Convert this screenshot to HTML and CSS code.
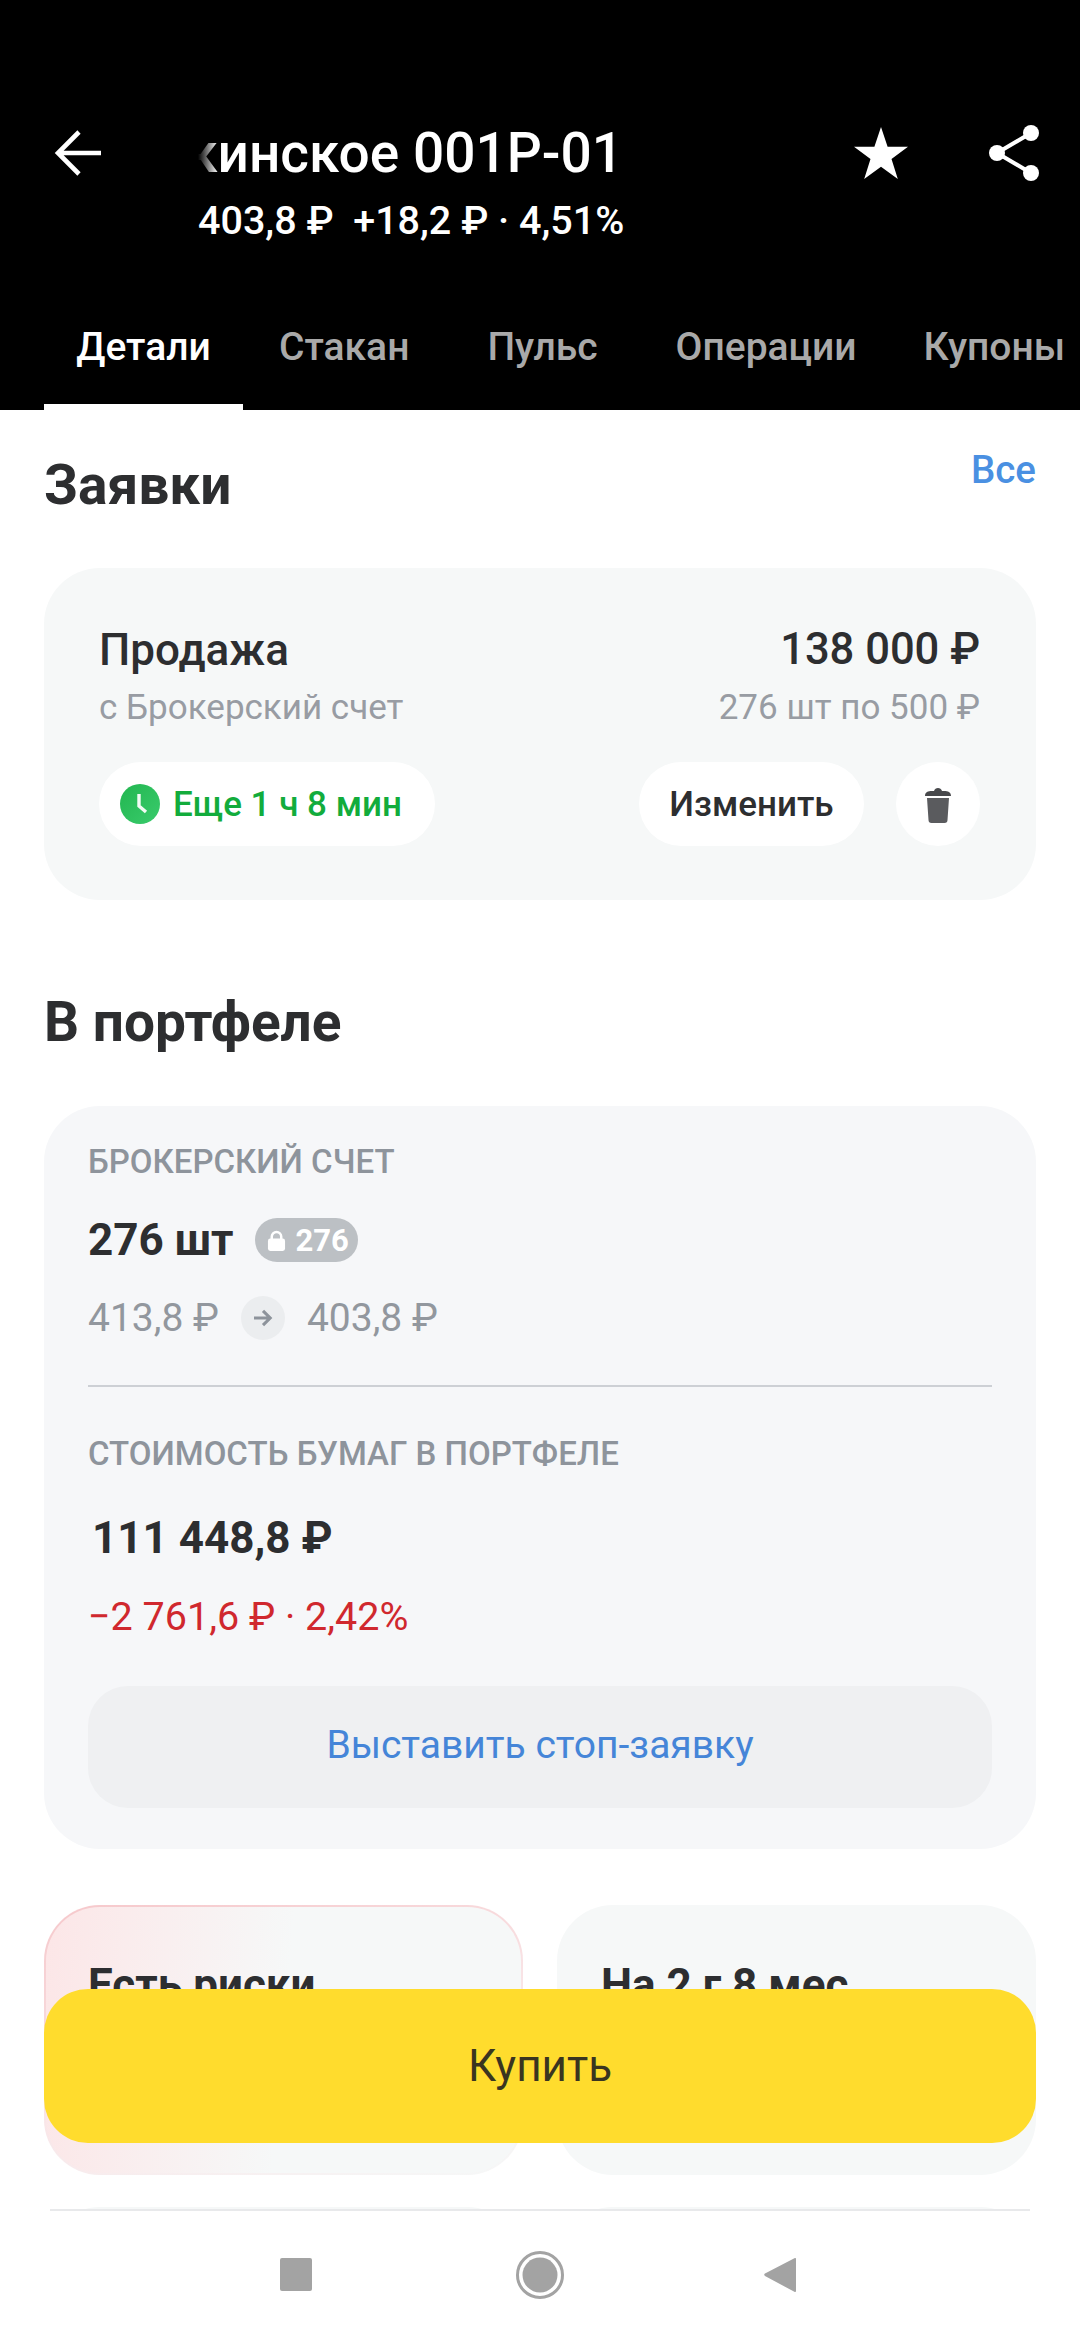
FILE: index.html
```html
<!DOCTYPE html>
<html lang="ru">
<head>
  <meta charset="UTF-8" />
  <meta name="viewport" content="width=device-width, initial-scale=1.0"/>
  <title>Детали</title>
  <link rel="stylesheet" href="styles.css">
</head>
<body>
  <div class="screen">
    <header class="top-bar">
      <div class="head-row">
        <svg class="back-icon" viewBox="0 0 48 48"><path d="M47 24H4M25 3 4 24l21 21" fill="none" stroke="#fff" stroke-width="4.6"/></svg>
        <div class="head-title">
          <div class="title-clip"><span class="title-text">кинское 001Р-01</span></div>
          <div class="head-price">403,8 ₽&nbsp;&nbsp;+18,2 ₽ · 4,51%</div>
        </div>
        <svg class="star-icon" viewBox="0 0 54 52"><path d="M27 0l6.600 19.800H54L37.500 32 43.800 52 27 39.800 10.200 52 16.500 32 0 19.800h20.400z" fill="#fff"/></svg>
        <svg class="share-icon" viewBox="0 0 50 56"><g fill="#fff"><circle cx="42" cy="8" r="8"/><circle cx="8" cy="28" r="8"/><circle cx="42" cy="48" r="8"/></g><path d="M42 8 8 28l34 20" fill="none" stroke="#fff" stroke-width="4"/></svg>
      </div>
      <nav class="tabs">
        <a class="tab tab-active">Детали</a>
        <a class="tab tab-stakan">Стакан</a>
        <a class="tab tab-puls">Пульс</a>
        <a class="tab tab-oper">Операции</a>
        <a class="tab">Купоны</a>
      </nav>
    </header>

    <main class="content">
      <div class="section-head">
        <h2>Заявки</h2>
        <a class="all-link">Все</a>
      </div>

      <section class="card order-card">
        <div class="order-row">
          <span class="order-type">Продажа</span>
          <span class="order-sum">138 000 ₽</span>
        </div>
        <div class="order-row order-sub">
          <span>с Брокерский счет</span>
          <span>276 шт по 500 ₽</span>
        </div>
        <div class="order-actions">
          <div class="pill timer-pill">
            <svg class="clock-icon" viewBox="0 0 40 40">
              <defs><linearGradient id="clockGreen" x1="0" y1="0" x2="1" y2="1"><stop offset="0" stop-color="#22b650"/><stop offset="1" stop-color="#3acb6c"/></linearGradient></defs>
              <circle cx="20" cy="20" r="20" fill="url(#clockGreen)"/>
              <path d="M19 10v12l7 6" fill="none" stroke="#f2fbf4" stroke-width="3.400"/>
            </svg>
            <span>Еще 1 ч 8 мин</span>
          </div>
          <div class="pill edit-pill">Изменить</div>
          <div class="pill trash-pill">
            <svg class="trash-icon" viewBox="0 0 26 37"><path d="M0 10C0 6 3 5 7 5h2c1-4 7-4 8 0h2c4 0 7 1 7 5z" fill="#47484b"/><path d="M2 12h22l-1.500 22a3 3 0 0 1-3 3h-13a3 3 0 0 1-3-3z" fill="#5a5b5e"/></svg>
          </div>
        </div>
      </section>

      <h2 class="portfolio-title">В портфеле</h2>

      <section class="card portfolio-card">
        <div class="caps-label">БРОКЕРСКИЙ СЧЕТ</div>
        <div class="qty-row">
          <span class="qty">276 шт</span>
          <span class="lock-badge">
            <svg class="lock-icon" viewBox="0 0 20 22"><path d="M5 10V7a5 5 0 0 1 10 0v3" fill="none" stroke="#fff" stroke-width="2.600"/><rect x="1" y="9" width="18" height="13" rx="2.500" fill="#fff"/></svg>
            276
          </span>
        </div>
        <div class="price-row">
          <span>413,8 ₽</span>
          <span class="arrow-dot">
            <svg viewBox="0 0 22 20"><path d="M1 10h18M11 2l8 8-8 8" fill="none" stroke="#8d939b" stroke-width="3.400"/></svg>
          </span>
          <span>403,8 ₽</span>
        </div>
        <div class="divider"></div>
        <div class="caps-label">СТОИМОСТЬ БУМАГ В ПОРТФЕЛЕ</div>
        <div class="total">111 448,8 ₽</div>
        <div class="loss">−2 761,6 ₽ · 2,42%</div>
        <div class="stop-btn">Выставить стоп-заявку</div>
      </section>

      <div class="mini-cards">
        <div class="mini-card risk-card">Есть риски</div>
        <div class="mini-card">На 2 г 8 мес</div>
      </div>
      <div class="mini-cards next-row">
        <div class="mini-card"></div>
        <div class="mini-card"></div>
      </div>
    </main>

    <button class="buy-btn">Купить</button>

    <footer class="nav-bar">
      <svg class="nav-square" viewBox="0 0 32 33"><rect width="32" height="33" rx="2" fill="#a3a3a3"/></svg>
      <svg class="nav-circle" viewBox="0 0 48 48"><circle cx="24" cy="24" r="22.500" fill="none" stroke="#a3a3a3" stroke-width="3"/><circle cx="24" cy="24" r="17.500" fill="#a3a3a3"/></svg>
      <svg class="nav-back" viewBox="0 0 32 36"><path d="M32 2v32a1 1 0 0 1-1.600.800L1 19a1.500 1.500 0 0 1 0-2.400L30.400 1.200A1 1 0 0 1 32 2z" fill="#a3a3a3"/></svg>
    </footer>
  </div>
</body>
</html>
```

FILE: styles.css
```css
* {
  box-sizing: border-box;
}

body {
  margin: 0;
  font-family: Roboto, "Noto Sans", sans-serif;
  color: #2d2e30;
  background: #fff;
}

.screen {
  position: relative;
  width: 1080px;
  height: 2340px;
  display: flex;
  flex-direction: column;
  overflow: hidden;
}

.top-bar {
  height: 410px;
  background: #000;
  color: #fff;
  padding-top: 118px;
  flex-shrink: 0;
}

.head-row {
  display: flex;
  align-items: flex-start;
  height: 130px;
  padding: 0 41px 0 54px;
}

.back-icon {
  width: 48px;
  height: 48px;
  margin-top: 11px;
}

.head-title {
  margin-left: 96px;
}

.title-clip {
  width: 425px;
  overflow: hidden;
  display: flex;
  justify-content: flex-end;
  -webkit-mask-image: linear-gradient(90deg, transparent 0, #000 20px);
  mask-image: linear-gradient(90deg, transparent 0, #000 20px);
}

.title-text {
  font-size: 55px;
  font-weight: 500;
  line-height: 70px;
  white-space: nowrap;
}

.head-price {
  font-size: 39.5px;
  font-weight: 500;
  line-height: 50px;
  margin-top: 8px;
  white-space: nowrap;
}

.star-icon {
  width: 54px;
  height: 52px;
  margin-left: auto;
  margin-top: 9px;
}

.share-icon {
  width: 50px;
  height: 56px;
  margin-left: 81px;
  margin-top: 7px;
}

.tabs {
  display: flex;
  height: 162px;
  font-size: 39px;
  font-weight: 500;
  color: #a9a9a9;
}

.tab {
  display: block;
  padding-top: 76px;
  white-space: nowrap;
}

.tab-active {
  width: 199px;
  margin-left: 44px;
  text-align: center;
  color: #fff;
  border-bottom: 6px solid #fff;
}

.tab-stakan {
  margin-left: 36px;
}

.tab-puls {
  margin-left: 78px;
}

.tab-oper {
  margin-left: 78px;
}

.tab:last-child {
  margin-left: 67px;
}

.content {
  padding: 0 44px;
}

.section-head {
  display: flex;
  justify-content: space-between;
  height: 158px;
  padding-top: 45px;
}

h2 {
  margin: 0;
  font-size: 55px;
  font-weight: 700;
  line-height: 60px;
}

.all-link {
  font-size: 38.5px;
  font-weight: 500;
  color: #4a90e2;
  line-height: 50px;
  margin-top: -10px;
}

.card {
  background: #f6f8f8;
  border-radius: 56px;
}

.order-card {
  height: 332px;
  padding: 52px 56px 0 55px;
}

.order-row {
  display: flex;
  justify-content: space-between;
  align-items: center;
}

.order-type {
  font-size: 44px;
  font-weight: 500;
  line-height: 60px;
}

.order-sum {
  font-size: 43.5px;
  font-weight: 500;
  line-height: 60px;
}

.order-sub {
  margin-top: 3px;
  font-size: 35px;
  line-height: 50px;
  color: #989ca3;
}

.order-actions {
  display: flex;
  align-items: center;
  margin-top: 29px;
}

.pill {
  display: flex;
  align-items: center;
  justify-content: center;
  height: 84px;
  border-radius: 42px;
  background: #fff;
  font-size: 35px;
  font-weight: 500;
}

.timer-pill {
  width: 336px;
  margin-right: auto;
  padding-left: 21px;
  justify-content: flex-start;
  color: #12ac3c;
}

.clock-icon {
  width: 40px;
  height: 40px;
  margin-right: 13px;
}

.edit-pill {
  width: 225px;
}

.trash-pill {
  width: 84px;
  margin-left: 32px;
}

.trash-icon {
  width: 26px;
  height: 37px;
}

.portfolio-title {
  margin-top: 92px;
  margin-bottom: 54px;
}

.portfolio-card {
  height: 743px;
  padding: 34px 44px 0;
  background: #f6f7f9;
}

.caps-label {
  font-size: 33px;
  font-weight: 500;
  line-height: 44px;
  color: #8e949c;
}

.qty-row {
  display: flex;
  align-items: center;
  margin-top: 31px;
  height: 50px;
}

.qty {
  font-size: 44px;
  font-weight: 700;
}

.lock-badge {
  display: flex;
  align-items: center;
  height: 44px;
  margin-left: 21px;
  padding: 0 9px 0 12px;
  border-radius: 22px;
  background: #bcc0c4;
  color: #fff;
  font-size: 31px;
  font-weight: 700;
}

.lock-icon {
  width: 19px;
  height: 21px;
  margin-right: 10px;
}

.price-row {
  display: flex;
  align-items: center;
  height: 50px;
  margin-top: 28px;
  font-size: 39px;
  color: #92979e;
}

.arrow-dot {
  display: flex;
  align-items: center;
  justify-content: center;
  width: 44px;
  height: 44px;
  margin: 0 22px;
  border-radius: 50%;
  background: #ebedef;
}

.arrow-dot svg {
  width: 20px;
  height: 18px;
}

.divider {
  height: 2px;
  margin-top: 42px;
  margin-bottom: 45px;
  background: #cdd0d5;
}

.total {
  margin-top: 36px;
  margin-left: 4px;
  font-size: 44px;
  font-weight: 700;
  line-height: 52px;
}

.loss {
  margin-top: 30px;
  font-size: 39.5px;
  line-height: 46px;
  color: #d0282e;
}

.stop-btn {
  height: 122px;
  margin-top: 46px;
  border-radius: 40px;
  background: #eff0f2;
  color: #4585d8;
  font-size: 39px;
  line-height: 118px;
  text-align: center;
}

.mini-cards {
  display: flex;
  gap: 34px;
  margin-top: 56px;
}

.mini-cards.next-row {
  margin-top: 32px;
}

.mini-card {
  flex: 1;
  height: 270px;
  padding: 50px 44px 0;
  border-radius: 56px;
  background: #f6f8f8;
  font-size: 44px;
  font-weight: 700;
  line-height: 60px;
}

.risk-card {
  border: 2px solid transparent;
  padding: 48px 42px 0;
  background:
    linear-gradient(95deg, #fce6e7 0, #f6f8f8 50%) padding-box,
    linear-gradient(165deg, #f6c8cb 0, #f9e6e8 55%, #f6f8f8 100%) border-box;
}

.buy-btn {
  position: absolute;
  left: 44px;
  top: 1989px;
  width: 992px;
  height: 154px;
  border: 0;
  border-radius: 44px;
  background: #ffdc2d;
  color: #3a3520;
  font-family: inherit;
  font-size: 44px;
}

.nav-bar {
  position: absolute;
  left: 0;
  right: 0;
  bottom: 0;
  top: 2209px;
  display: flex;
  align-items: center;
  padding-left: 280px;
  background: #fff;
}

.nav-bar::before {
  content: "";
  position: absolute;
  left: 50px;
  right: 50px;
  top: 0;
  height: 2px;
  background: #e8e9eb;
}

.nav-square {
  width: 32px;
  height: 33px;
}

.nav-circle {
  width: 48px;
  height: 48px;
  margin-left: 204px;
}

.nav-back {
  width: 32px;
  height: 36px;
  margin-left: 200px;
}
```
